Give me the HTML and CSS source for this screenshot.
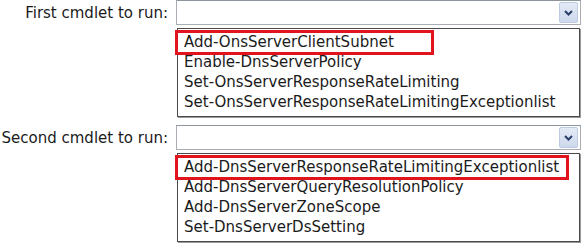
FILE: index.html
```html
<!DOCTYPE html>
<html lang="en">
<head>
  <meta charset="UTF-8">
  <title>Cmdlet answer area</title>
  <link rel="stylesheet" href="styles.css">
</head>
<body>
  <div class="answer">
    <div class="row">
      <div class="label">First cmdlet to run:</div>
      <div class="field">
        <div class="select"><span class="arrow"><svg width="9" height="6" viewBox="0 0 9 6"><path d="M1 1 L4.5 4.5 L8 1" fill="none" stroke="#2b3f6b" stroke-width="2"/></svg></span></div>
        <ul class="list">
          <li><span class="pick pick-short">Add-OnsServerClientSubnet</span></li>
          <li>Enable-DnsServerPolicy</li>
          <li>Set-OnsServerResponseRateLimiting</li>
          <li>Set-OnsServerResponseRateLimitingExceptionlist</li>
        </ul>
      </div>
    </div>
    <div class="row">
      <div class="label">Second cmdlet to run:</div>
      <div class="field">
        <div class="select"><span class="arrow"><svg width="9" height="6" viewBox="0 0 9 6"><path d="M1 1 L4.5 4.5 L8 1" fill="none" stroke="#2b3f6b" stroke-width="2"/></svg></span></div>
        <ul class="list">
          <li><span class="pick pick-long">Add-DnsServerResponseRateLimitingExceptionlist</span></li>
          <li>Add-DnsServerQueryResolutionPolicy</li>
          <li>Add-DnsServerZoneScope</li>
          <li>Set-DnsServerDsSetting</li>
        </ul>
      </div>
    </div>
  </div>
</body>
</html>
```

FILE: styles.css
```css
body {
  margin: 0;
  background: #fff;
  font-family: "DejaVu Sans", Verdana, sans-serif;
  font-size: 15px;
  color: #1b1b1b;
}
.answer {
  width: 581px;
}
.row {
  display: flex;
  align-items: flex-start;
  margin-bottom: 8px;
}
.label {
  width: 168px;
  padding-right: 8px;
  text-align: right;
  line-height: 26px;
}
.field {
  width: 405px;
}
.select {
  height: 23px;
  border: 1px solid #a8adb4;
  border-top-color: #8e949c;
  display: flex;
  justify-content: flex-end;
  align-items: center;
  padding-right: 2px;
  background: #fff;
}
.arrow {
  width: 17px;
  height: 19px;
  display: flex;
  align-items: center;
  justify-content: center;
  background: linear-gradient(#e4ebf7, #cdd8ec);
  border: 1px solid #bccbe2;
  border-radius: 2px;
}
.list {
  list-style: none;
  margin: 3px 1px 0 1px;
  padding: 3px 0 4px;
  border: 1px solid #4a4a4a;
  box-shadow: 1px 1px 0 #9a9a9a;
}
.list li {
  line-height: 20px;
  padding-left: 6px;
  white-space: nowrap;
}
.pick {
  display: inline-block;
  margin-left: -6px;
  padding-left: 6px;
  line-height: 19px;
  outline: 3px solid #e1141d;
}
.pick-short {
  padding-right: 37px;
}
.pick-long {
  padding-right: 7px;
}
```
